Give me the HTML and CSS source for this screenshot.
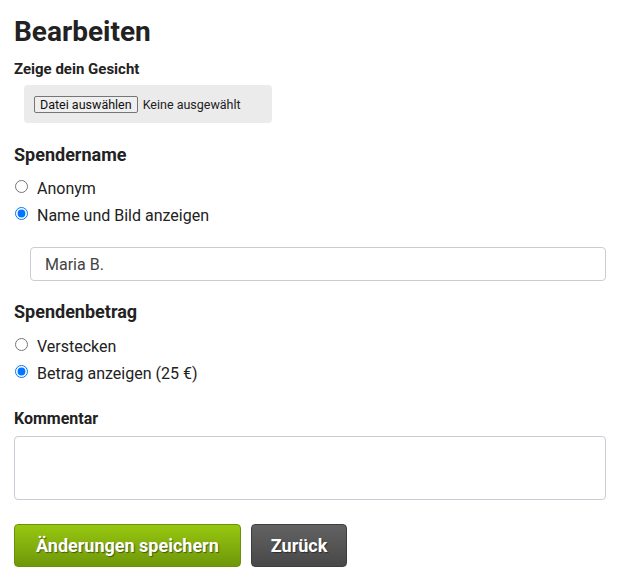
FILE: index.html
```html
<!DOCTYPE html>
<html lang="de">
<head>
<meta charset="utf-8">
<title>Bearbeiten</title>
<link rel="stylesheet" href="styles.css">
</head>
<body>
<form class="page">
  <h1 class="title">Bearbeiten</h1>
  <div class="field">
    <div class="label-small">Zeige dein Gesicht</div>
    <div class="file-box">
      <label class="file-btn">Datei auswählen<input type="file" class="file-input"></label>
      <span class="file-name">Keine ausgewählt</span>
    </div>
  </div>

  <div class="section">
    <h2 class="section-title">Spendername</h2>
    <label class="radio"><input type="radio" name="name"><span>Anonym</span></label>
    <label class="radio"><input type="radio" name="name" checked><span>Name und Bild anzeigen</span></label>
    <input type="text" class="text-input" value="Maria B.">
  </div>

  <div class="section amount">
    <h2 class="section-title">Spendenbetrag</h2>
    <label class="radio"><input type="radio" name="amount"><span>Verstecken</span></label>
    <label class="radio"><input type="radio" name="amount" checked><span>Betrag anzeigen (25 €)</span></label>
  </div>

  <div class="section comment">
    <div class="label">Kommentar</div>
    <textarea class="textarea"></textarea>
  </div>

  <div class="actions">
    <button type="button" class="btn btn-primary">Änderungen speichern</button>
    <button type="button" class="btn btn-secondary">Zurück</button>
  </div>
</form>
</body>
</html>
```
FILE: styles.css
```css
html, body {
  margin: 0;
  padding: 0;
  background: #fff;
}
body {
  font-family: Roboto, "Open Sans", sans-serif;
  color: #222;
}
.page {
  margin: 0 20px 0 14px;
  padding-top: 14px;
  display: flex;
  flex-direction: column;
}
.title {
  margin: 0;
  font-size: 28px;
  line-height: 36px;
  font-weight: 700;
  color: #222;
}
.label-small {
  font-size: 15px;
  font-weight: 700;
  line-height: 20px;
  margin-top: 9px;
}
.file-box {
  margin: 6px 0 0 10px;
  width: 248px;
  height: 38px;
  box-sizing: border-box;
  background: #ebebeb;
  border-radius: 4px;
  display: flex;
  align-items: center;
  padding-left: 10px;
  gap: 5px;
  font-size: 12.5px;
}
.file-btn {
  border: 1px solid #767676;
  border-radius: 2px;
  background: #efefef;
  padding: 0 5px;
  height: 17px;
  line-height: 15px;
  box-sizing: border-box;
  color: #111;
}
.file-input {
  display: none;
}
.file-name {
  color: #222;
}
.section {
  margin-top: 20px;
  display: flex;
  flex-direction: column;
}
.amount {
  margin-top: 19px;
}
.section-title {
  margin: 0 0 8px;
  font-size: 18px;
  line-height: 24px;
  font-weight: 700;
}
.amount .section-title {
  margin-bottom: 9px;
}
.radio {
  display: flex;
  align-items: center;
  height: 27px;
  font-size: 16px;
  color: #222;
}
.radio input {
  margin: 0 9px 0 1px;
  width: 13px;
  height: 13px;
  position: relative;
  top: -2px;
}
.text-input {
  margin: 18px 0 0 16px;
  height: 34px;
  box-sizing: border-box;
  border: 1px solid #c9ccd4;
  border-radius: 4px;
  padding: 0 14px;
  font-family: inherit;
  font-size: 16px;
  color: #444;
}
.comment {
  margin-top: 22px;
}
.label {
  font-size: 16px;
  font-weight: 700;
  line-height: 20px;
  margin-bottom: 7px;
}
.textarea {
  height: 64px;
  box-sizing: border-box;
  border: 1px solid #c9ccd4;
  border-radius: 4px;
  resize: none;
  font-family: inherit;
}
.actions {
  margin-top: 24px;
  display: flex;
  gap: 10px;
}
.btn {
  height: 43px;
  border-radius: 4px;
  font-family: inherit;
  font-size: 18px;
  font-weight: 700;
  color: #fff;
  text-shadow: 1px 1px 1px rgba(0,0,0,0.45);
  white-space: nowrap;
  cursor: pointer;
}
.btn-primary {
  padding: 0 21px;
  background: linear-gradient(#98c710, #6e980a);
  border: 1px solid #6a9208;
}
.btn-secondary {
  padding: 0 19px;
  background: linear-gradient(#626262, #484848);
  border: 1px solid #3e3e3e;
}
```
